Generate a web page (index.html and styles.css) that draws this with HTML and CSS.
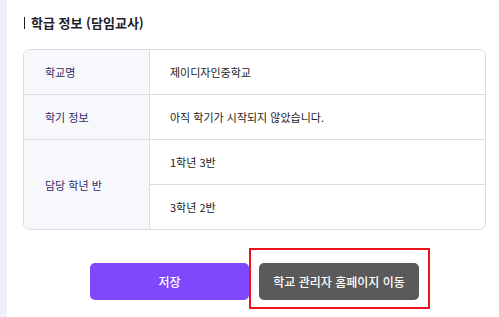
FILE: index.html
```html
<!DOCTYPE html>
<html lang="ko">
<head>
    <meta charset="UTF-8">
    <meta name="viewport" content="width=device-width, initial-scale=1.0">
    <title>학급 정보</title>
    <link rel="stylesheet" href="styles.css">
</head>
<body>
    <div class="layout">
        <div class="side"></div>
        <div class="content">

            <h2 class="section-title">학급 정보 (담임교사)</h2>

            <div class="info-table">
                <div class="label">학교명</div>
                <div class="value">제이디자인중학교</div>

                <div class="label">학기 정보</div>
                <div class="value">아직 학기가 시작되지 않았습니다.</div>

                <div class="label tall">담당 학년 반</div>
                <div class="value">1학년 3반</div>
                <div class="value last">3학년 2반</div>
            </div>

            <div class="actions">
                <button class="btn btn-save">저장</button>
                <button class="btn btn-admin">학교 관리자 홈페이지 이동<span class="highlight"></span></button>
            </div>
        </div>
    </div>
</body>
</html>
```

FILE: styles.css
```css
body {
    font-family: "Noto Sans CJK KR", "Noto Sans", sans-serif;
    margin: 0;
    padding: 0;
    background-color: white;
    color: #222;
}
.layout {
    display: flex;
    height: 317px;
}
.side {
    width: 7px;
    background-color: #eef0fb;
}
.content {
    flex: 1;
    padding: 0 13px 0 16px;
}
.section-title {
    margin: 13px 0 0 0;
    height: 20px;
    line-height: 20px;
    font-size: 13px;
    font-weight: bold;
    color: #1e1e2a;
    display: flex;
    align-items: center;
}
.section-title::before {
    content: "";
    display: inline-block;
    width: 1px;
    height: 12px;
    background-color: #1e1e2a;
    margin-left: 1px;
    margin-right: 6px;
}
.info-table {
    margin-top: 16px;
    display: grid;
    grid-template-columns: 126px 1fr;
    grid-template-rows: 45px 45px 45px 44px;
    border: 1px solid #dcdcdc;
    border-radius: 7px;
    overflow: hidden;
}
.label {
    display: flex;
    align-items: center;
    padding-left: 21px;
    font-size: 11px;
    color: #2f2a66;
    background-color: #f7f8fc;
    border-right: 1px solid #dcdcdc;
    border-bottom: 1px solid #dcdcdc;
}
.label.tall {
    grid-row: span 2;
    border-bottom: none;
}
.value {
    display: flex;
    align-items: center;
    padding-left: 20px;
    font-size: 11px;
    color: #222;
    border-bottom: 1px solid #dcdcdc;
}
.value.last {
    border-bottom: none;
}
.actions {
    margin-top: 33px;
    display: flex;
    justify-content: center;
    gap: 10px;
}
.btn {
    position: relative;
    width: 160px;
    height: 37px;
    border: none;
    border-radius: 5px;
    color: white;
    font-family: "Noto Sans CJK KR", "Noto Sans", sans-serif;
    font-size: 12px;
    font-weight: 500;
    cursor: pointer;
}
.btn-save {
    width: 159px;
    background-color: #8048fd;
}
.btn-admin {
    background-color: #5a5a5a;
}
/* red annotation box around the admin button */
.highlight {
    position: absolute;
    left: -10px;
    top: -15px;
    right: -11px;
    bottom: -9px;
    border: 2px solid #e8141c;
    pointer-events: none;
}
```
